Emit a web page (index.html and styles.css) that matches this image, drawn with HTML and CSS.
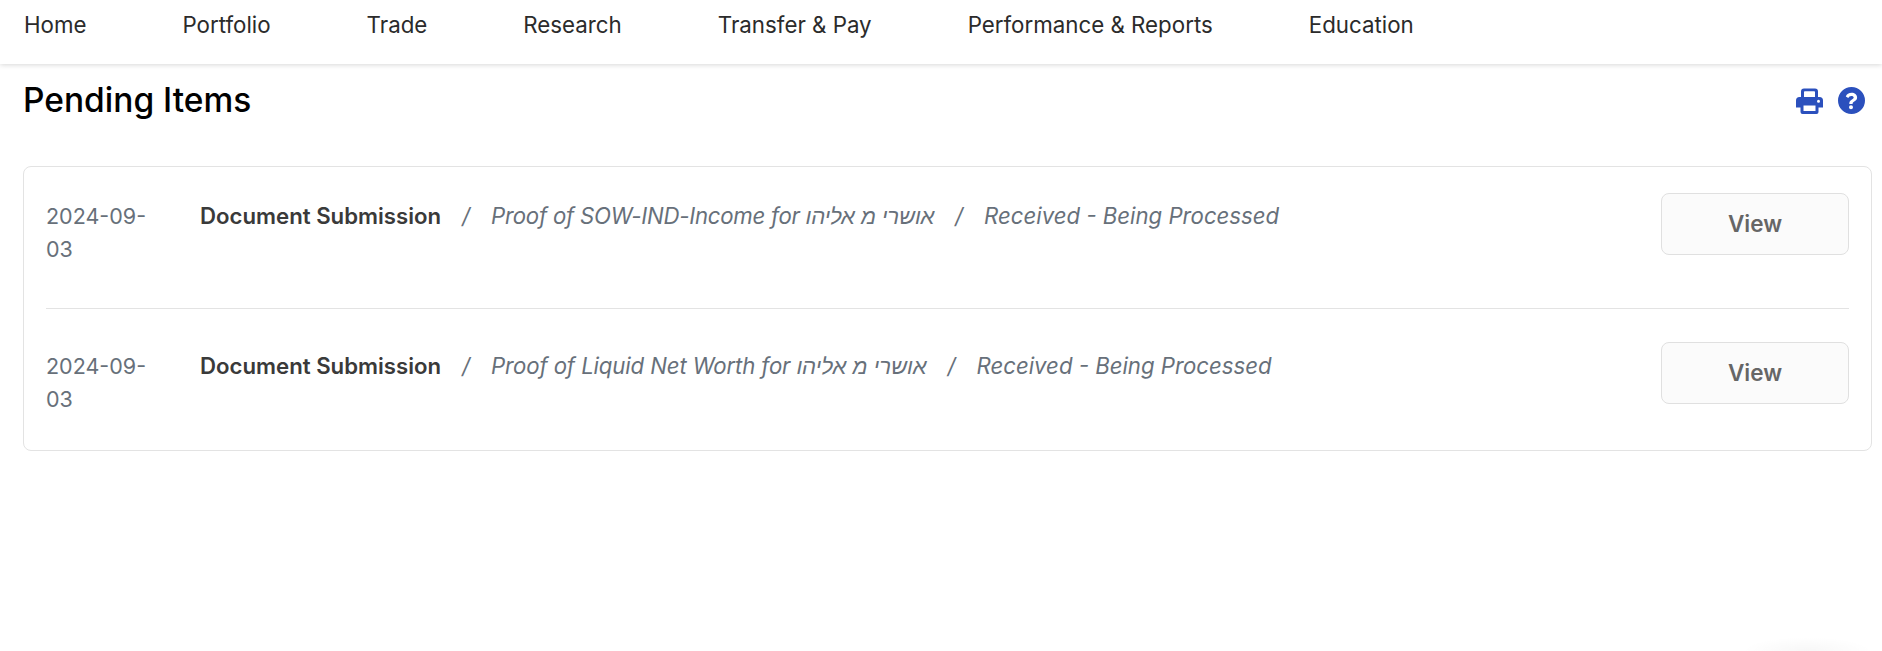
FILE: index.html
```html
<!DOCTYPE html>
<html lang="en">
<head>
<meta charset="utf-8">
<title>Pending Items</title>
<link rel="stylesheet" href="styles.css">
</head>
<body>
<header class="topnav">
  <nav class="nav-list">
    <a class="nav-item">Home</a>
    <a class="nav-item">Portfolio</a>
    <a class="nav-item">Trade</a>
    <a class="nav-item">Research</a>
    <a class="nav-item">Transfer &amp; Pay</a>
    <a class="nav-item">Performance &amp; Reports</a>
    <a class="nav-item">Education</a>
  </nav>
</header>
<main class="page">
  <div class="page-head">
    <h1 class="page-title">Pending Items</h1>
    <div class="page-tools">
      <svg class="tool-icon" viewBox="0 0 27 27" aria-label="Print">
        <path d="M5 11V4.500A3 3 0 0 1 8 1.500h11a3 3 0 0 1 3 3V11h-3V5a.8.8 0 0 0-.8-.8H8.800A.8.8 0 0 0 8 5v6z"/>
        <path fill-rule="evenodd" d="M3.500 10h20A3.500 3.500 0 0 1 27 13.500V20.500h-4.500V25a2 2 0 0 1-2 2H6.500a2 2 0 0 1-2-2V20.500H0V13.500A3.500 3.500 0 0 1 3.500 10zM7.500 18.500V24h12V18.500zM22.500 12.800a1.500 1.500 0 1 0 0 3 1.500 1.500 0 0 0 0-3z"/>
      </svg>
      <svg class="tool-icon" viewBox="0 0 27 27" aria-label="Help">
        <path fill-rule="evenodd" d="M13.500 0a13.500 13.500 0 1 1 0 27 13.500 13.500 0 0 1 0-27zM13.700 5.800c-3 0-4.900 1.300-5.900 3.600l2.500 1.500c.6-1.200 1.500-2 3.100-2 1.300 0 2.300.7 2.300 1.700 0 .9-.7 1.300-1.800 2-1.300.8-2.600 1.700-2.600 3.900v.6h3.300v-.4c0-1 .6-1.400 1.700-2.100 1.500-.9 2.800-2 2.800-4.100 0-2.900-2.600-4.700-5.400-4.700zM13 18.300a2 2 0 1 0 0 4 2 2 0 0 0 0-4z"/>
      </svg>
    </div>
  </div>
  <section class="card">
    <article class="item">
      <div class="item-date">2024-09-03</div>
      <div class="item-body">
        <strong class="item-kind">Document Submission</strong>
        <span class="sep">/</span>
        <em class="item-text item-text-tight">Proof of SOW-IND-Income for אושרי מ אליהו</em>
        <span class="sep">/</span>
        <em class="item-text">Received - Being Processed</em>
      </div>
      <button class="view-btn" type="button">View</button>
    </article>
    <article class="item">
      <div class="item-date">2024-09-03</div>
      <div class="item-body">
        <strong class="item-kind">Document Submission</strong>
        <span class="sep">/</span>
        <em class="item-text item-text-snug">Proof of Liquid Net Worth for אושרי מ אליהו</em>
        <span class="sep">/</span>
        <em class="item-text">Received - Being Processed</em>
      </div>
      <button class="view-btn" type="button">View</button>
    </article>
  </section>
</main>
<div class="corner-glow"></div>
</body>
</html>
```
FILE: styles.css
```css
* { box-sizing: border-box; }
html, body { margin: 0; height: 100%; overflow: hidden; }
body {
  background: #fff;
  color: #333;
  font-family: "Inter", "Liberation Sans", sans-serif;
  position: relative;
}
.topnav {
  height: 64px;
  background: #fff;
  box-shadow: 0 1px 5px rgba(0, 0, 0, 0.16);
  padding: 10px 24px 0;
}
.nav-list {
  display: flex;
  gap: 96px;
}
.nav-item {
  font-size: 22.3px;
  line-height: 30px;
  color: #2b2b2b;
}
.page { padding: 0 10px 0 23px; }
.page-head {
  display: flex;
  justify-content: space-between;
  align-items: center;
  height: 102px;
  padding: 0 7px 31px 0;
}
.page-title {
  margin: 0;
  font-size: 33.5px;
  line-height: 40px;
  font-weight: 500;
  color: #000;
}
.page-tools { display: flex; gap: 15px; padding-top: 2px; }
.tool-icon { width: 27px; height: 27px; fill: #2b50bd; display: block; }
.card {
  border: 1px solid #e3e3e3;
  border-radius: 8px;
  padding: 0 22px;
  height: 285px;
}
.item {
  display: flex;
  align-items: flex-start;
  height: 141px;
  padding-top: 26px;
}
.item + .item {
  border-top: 1px solid #e3e3e3;
  height: 142px;
  padding-top: 33px;
}
.item + .item .item-date { margin-top: 8px; }
.item + .item .item-body { margin-top: 7px; }
.item-date {
  width: 110px;
  margin-right: 44px;
  flex: none;
  font-size: 21.5px;
  line-height: 33px;
  color: #67707a;
  margin-top: 7px;
}
.item-body {
  flex: 1;
  font-size: 22.2px;
  line-height: 33px;
  margin-top: 6px;
  display: flex;
  gap: 21px;
  color: #67707a;
}
.item-kind { font-weight: 600; color: #3a3a3a; }
.sep { color: #67707a; font-style: italic; }
.item-text { font-style: italic; font-weight: 400; }
.item-text-tight { letter-spacing: -0.24px; }
.item-text-snug { letter-spacing: -0.12px; }
.view-btn {
  flex: none;
  width: 188px;
  height: 62px;
  padding: 0 0 2px;
  border: 1px solid #e0e0e0;
  border-radius: 8px;
  background: #fbfbfb;
  color: #666;
  font-family: "Inter", "Liberation Sans", sans-serif;
  font-size: 22.5px;
  font-weight: 600;
}
.corner-glow {
  position: absolute;
  right: 10px;
  bottom: -14px;
  width: 130px;
  height: 28px;
  border-radius: 50%;
  background: radial-gradient(closest-side, rgba(0,0,0,0.03), rgba(0,0,0,0));
}
```
